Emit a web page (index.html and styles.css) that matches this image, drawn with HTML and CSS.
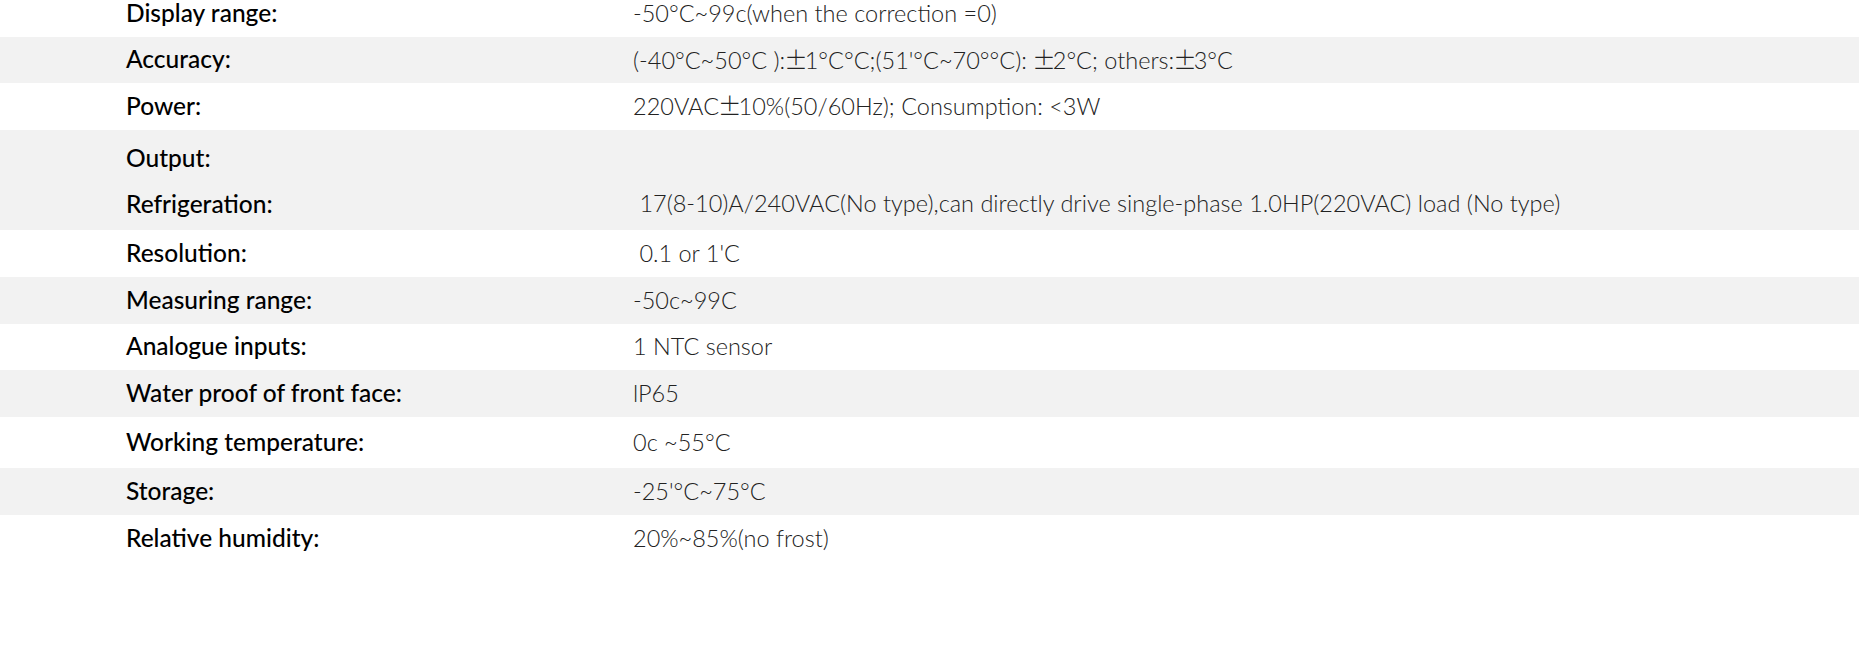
FILE: index.html
```html
<!DOCTYPE html>
<html lang="en">
<head>
<meta charset="utf-8">
<title>Specifications</title>
<link rel="stylesheet" href="styles.css">
</head>
<body>
<div class="specs">
  <div class="row h47"><div class="label">Display range:</div><div class="value">-50°C~99c(when the correction =0)</div></div>
  <div class="row alt h46"><div class="label">Accuracy:</div><div class="value">(-40°C~50°C ):<span class="sym">±</span>1°C°C;(51'°C~70°°C): <span class="sym">±</span>2°C; others:<span class="sym">±</span>3°C</div></div>
  <div class="row h47"><div class="label">Power:</div><div class="value">220VAC<span class="sym">±</span>10%(50/60Hz); Consumption: &lt;3W</div></div>
  <div class="row alt double"><div class="label"><div>Output:</div><div>Refrigeration:</div></div><div class="value"><div>&nbsp;</div><div>&nbsp;17(8-10)A/240VAC(No type),can directly drive single-phase 1.0HP(220VAC) load (No type)</div></div></div>
  <div class="row h47"><div class="label">Resolution:</div><div class="value">&nbsp;0.1 or 1'C</div></div>
  <div class="row alt h47"><div class="label">Measuring range:</div><div class="value">-50c~99C</div></div>
  <div class="row h46"><div class="label">Analogue inputs:</div><div class="value">1 NTC sensor</div></div>
  <div class="row alt h47"><div class="label">Water proof of front face:</div><div class="value">lP65</div></div>
  <div class="row h51"><div class="label">Working temperature:</div><div class="value">0c ~55°C</div></div>
  <div class="row alt h47"><div class="label">Storage:</div><div class="value">-25'°C~75°C</div></div>
  <div class="row h47"><div class="label">Relative humidity:</div><div class="value">20%~85%(no frost)</div></div>
</div>
</body>
</html>
```

FILE: styles.css
```css
html, body {
  margin: 0;
  padding: 0;
  background: #ffffff;
}

body {
  font-family: Lato, "Noto Sans", sans-serif;
  color: #111;
}

.specs {
  margin-top: -10px;
}

.row {
  display: grid;
  grid-template-columns: 507px 1fr;
  align-items: center;
  padding-left: 126px;
  padding-bottom: 2px;
  box-sizing: border-box;
  line-height: 30px;
}

.row.alt {
  background: #f2f2f2;
}

.h46 { height: 46px; }
.h47 { height: 47px; }
.h51 { height: 51px; }

.row.double {
  height: 100px;
  align-items: start;
  padding-top: 5px;
  padding-bottom: 0;
  line-height: 45.5px;
}

.label {
  font-size: 24.5px;
  font-weight: 500;
  color: #000;
  white-space: nowrap;
}

.value {
  font-size: 23.5px;
  font-weight: 300;
  color: #222;
  white-space: nowrap;
}

.sym {
  font-family: "Noto Sans CJK SC", sans-serif;
  font-weight: 300;
  letter-spacing: -3px;
  margin-left: -1px;
}
```
